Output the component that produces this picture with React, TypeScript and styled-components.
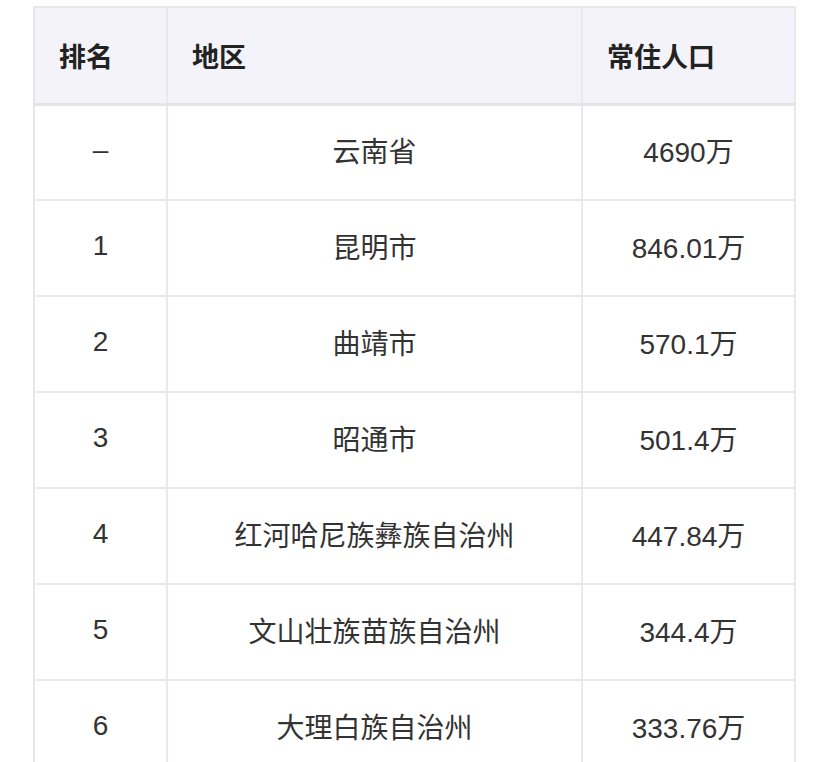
import React from 'react';
import styled, { createGlobalStyle } from 'styled-components';

const GlobalStyle = createGlobalStyle`
  html, body {
    margin: 0;
    padding: 0;
    background: #ffffff;
  }
  body {
    font-family: "Liberation Sans", "Noto Sans CJK SC", sans-serif;
    color: #222;
  }
  *, *::before, *::after {
    box-sizing: border-box;
  }
`;

const Page = styled.div`
  padding: 6px 0 0 33px;
  width: 828px;
  height: 762px;
  overflow: hidden;
`;

const Table = styled.table`
  width: 761px;
  border-collapse: collapse;
  table-layout: fixed;
  border: 2px solid #e6e7ec;
`;

const HeadCell = styled.th<{ $width: number }>`
  width: ${({ $width }) => $width}px;
  height: 97px;
  padding: 0 0 0 24px;
  text-align: left;
  font-size: 27px;
  font-weight: 700;
  color: #222;
  background: #f3f3f9;
  border-right: 2px solid #e8e9ee;
  border-bottom: 3px solid #e3e4ea;
`;

const Row = styled.tr`
  border-bottom: 2px solid #e8e9ee;
`;

const Cell = styled.td`
  height: 96px;
  padding: 0 0 4px;
  text-align: center;
  font-size: 28px;
  color: #333;
  border-right: 2px solid #e8e9ee;
`;

const rows = [
  { rank: '–', region: '云南省', pop: '4690万' },
  { rank: '1', region: '昆明市', pop: '846.01万' },
  { rank: '2', region: '曲靖市', pop: '570.1万' },
  { rank: '3', region: '昭通市', pop: '501.4万' },
  { rank: '4', region: '红河哈尼族彝族自治州', pop: '447.84万' },
  { rank: '5', region: '文山壮族苗族自治州', pop: '344.4万' },
  { rank: '6', region: '大理白族自治州', pop: '333.76万' },
];

const App: React.FC = () => (
  <>
    <GlobalStyle />
    <Page>
      <Table>
        <thead>
          <tr>
            <HeadCell $width={133}>排名</HeadCell>
            <HeadCell $width={415}>地区</HeadCell>
            <HeadCell $width={213}>常住人口</HeadCell>
          </tr>
        </thead>
        <tbody>
          {rows.map((r) => (
            <Row key={r.region}>
              <Cell>{r.rank}</Cell>
              <Cell>{r.region}</Cell>
              <Cell>{r.pop}</Cell>
            </Row>
          ))}
        </tbody>
      </Table>
    </Page>
  </>
);

export default App;
